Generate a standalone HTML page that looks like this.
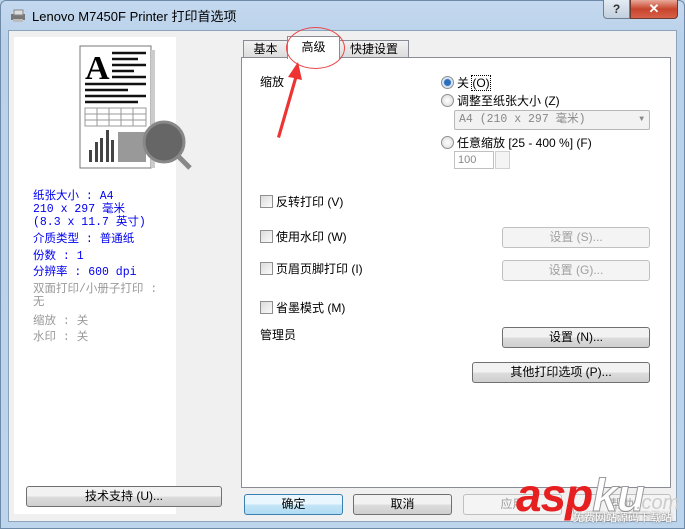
<!DOCTYPE html>
<html><head><meta charset="utf-8"><style>
*{margin:0;padding:0;box-sizing:border-box}
body{width:685px;height:529px;overflow:hidden;background:#bcd3ea;font-family:"Liberation Sans","Noto Sans CJK SC",sans-serif;font-size:12px;color:#000;position:relative}
.a{position:absolute}
.frame{left:0;top:0;width:685px;height:529px;background:linear-gradient(#c4d9ef,#b9d1ea 40px,#bcd4ec);border:1px solid #6d8aa8;border-radius:6px 6px 0 0}
.client{left:8px;top:30px;width:669px;height:492px;background:#f0f0f0;border:1px solid #8da3bb}
.btn{position:absolute;height:21px;border:1px solid #707070;border-radius:3px;background:linear-gradient(#f2f2f2 50%,#dddddd 50%,#cfcfcf);text-align:center;line-height:19px;font-size:12px}
.dis{border-color:#c0c0c0;background:#f4f4f4;color:#a0a0a0}
.cb{position:absolute;width:13px;height:13px;border:1px solid #8e8f8f;background:linear-gradient(135deg,#dcdcdc,#fbfbfb)}
.rd{position:absolute;width:13px;height:13px;border:1px solid #8e8f8f;border-radius:50%;background:radial-gradient(#fff,#d8d8d8)}
.hr{position:absolute;height:1px;background:#a0a0a0;border-bottom:1px solid #fff}
.blue{color:#0000f0;font-family:"Liberation Mono","Noto Sans CJK SC",monospace;font-size:11.5px;line-height:13px}
.gray{color:#9a9a9a;font-family:"Liberation Mono","Noto Sans CJK SC",monospace;font-size:11.5px;line-height:13px}
</style></head><body>
<div class="a frame"></div>
<svg class="a" style="left:9px;top:8px" width="18" height="16"><rect x="2" y="6" width="14" height="6" fill="#777"/><rect x="5" y="2" width="9" height="5" fill="#ddd" stroke="#888"/><rect x="4" y="11" width="10" height="3" fill="#bbb"/></svg>
<div class="a" style="left:32px;top:6px;font-size:13px">Lenovo M7450F Printer 打印首选项</div>
<div class="a" style="left:603px;top:0;width:27px;height:19px;border:1px solid #6f7f90;border-top:none;border-radius:0 0 0 4px;background:linear-gradient(#e4ebf3,#c2d0de);text-align:center;font-weight:bold;color:#333;line-height:18px">?</div>
<div class="a" style="left:630px;top:0;width:48px;height:19px;border:1px solid #6f3a30;border-top:none;border-radius:0 0 4px 0;background:linear-gradient(#e9a99a,#c7452d 50%,#d8604a);text-align:center;font-weight:bold;color:#fff;line-height:18px;font-size:13px">✕</div>
<div class="a client"></div>
<div class="a" style="left:14px;top:37px;width:162px;height:477px;background:#fff"></div>
<svg class="a" style="left:78px;top:44px" width="120" height="126">
<rect x="2" y="2" width="71" height="122" fill="#fff" stroke="#777"/>
<rect x="73" y="6" width="4" height="118" fill="#ccc"/>
<text x="7" y="35" font-family="Liberation Serif" font-weight="bold" font-size="34">A</text>
<g stroke="#111" stroke-width="2.5"><line x1="34" y1="9" x2="68" y2="9"/><line x1="34" y1="15" x2="60" y2="15"/><line x1="34" y1="21" x2="68" y2="21"/><line x1="34" y1="27" x2="56" y2="27"/><line x1="34" y1="33" x2="68" y2="33"/><line x1="7" y1="40" x2="68" y2="40"/><line x1="7" y1="46" x2="50" y2="46"/><line x1="7" y1="52" x2="68" y2="52"/><line x1="7" y1="58" x2="60" y2="58"/></g>
<g stroke="#999" stroke-width="1"><rect x="7" y="64" width="61" height="18" fill="none"/><line x1="7" y1="70" x2="68" y2="70"/><line x1="7" y1="76" x2="68" y2="76"/><line x1="19" y1="64" x2="19" y2="82"/><line x1="31" y1="64" x2="31" y2="82"/><line x1="43" y1="64" x2="43" y2="82"/><line x1="55" y1="64" x2="55" y2="82"/></g>
<g fill="#444"><rect x="11" y="106" width="3" height="12"/><rect x="17" y="98" width="3" height="20"/><rect x="22" y="94" width="3" height="24"/><rect x="28" y="86" width="3" height="32"/><rect x="33" y="96" width="3" height="22"/></g>
<rect x="40" y="88" width="28" height="30" fill="#999"/>
<circle cx="86" cy="98" r="20" fill="#666" stroke="#888" stroke-width="3"/>
<line x1="100" y1="112" x2="112" y2="124" stroke="#888" stroke-width="5"/>
</svg>
<div class="a blue" style="left:33px;top:190px">纸张大小 : A4<br>210 x 297 毫米<br>(8.3 x 11.7 英寸)</div>
<div class="a blue" style="left:33px;top:233px">介质类型 : 普通纸</div>
<div class="a blue" style="left:33px;top:250px">份数 : 1</div>
<div class="a blue" style="left:33px;top:266px">分辨率 : 600 dpi</div>
<div class="a gray" style="left:33px;top:283px">双面打印/小册子打印 :<br>无</div>
<div class="a gray" style="left:33px;top:315px">缩放 : 关</div>
<div class="a gray" style="left:33px;top:331px">水印 : 关</div>
<div class="btn" style="left:26px;top:486px;width:196px">技术支持 (U)...</div>
<div class="a" style="left:241px;top:57px;width:430px;height:431px;background:#fff;border:1px solid #898c95"></div>
<div class="a" style="left:243px;top:40px;width:45px;height:18px;border:1px solid #898c95;background:linear-gradient(#f2f2f2,#dcdcdc);text-align:center;line-height:16px">基本</div>
<div class="a" style="left:339px;top:40px;width:70px;height:18px;border:1px solid #898c95;background:linear-gradient(#f2f2f2,#dcdcdc);text-align:center;line-height:16px">快捷设置</div>
<div class="a" style="left:287px;top:36px;width:53px;height:23px;border:1px solid #898c95;border-bottom:none;background:#fff;text-align:center;line-height:20px">高级</div>
<div class="a" style="left:286px;top:27px;width:59px;height:42px;border:1.5px solid #e84848;border-radius:50%"></div>
<svg class="a" style="left:270px;top:60px" width="40" height="80"><polygon points="7,77 24,18 18,17 28,2 32,20 27,19 10,78" fill="#ee3333"/></svg>
<div class="a" style="left:260px;top:73px">缩放</div>
<div class="rd" style="left:441px;top:76px;background:radial-gradient(#2a6fbf 3px,#d8e6f4 4px)"></div>
<div class="a" style="left:457px;top:74px">关 <span style="outline:1px dotted #000">(O)</span></div>
<div class="rd" style="left:441px;top:94px"></div>
<div class="a" style="left:457px;top:92px">调整至纸张大小 (Z)</div>
<div class="a" style="left:454px;top:110px;width:196px;height:20px;border:1px solid #b8b8b8;border-radius:2px;background:#f2f2f2;color:#888;font-family:'Liberation Mono','Noto Sans CJK SC',monospace;line-height:18px;padding-left:4px;font-size:11.5px">A4 (210 x 297 毫米)<span style="position:absolute;right:5px;font-size:8px">▼</span></div>
<div class="rd" style="left:441px;top:136px"></div>
<div class="a" style="left:457px;top:134px">任意缩放 [25 - 400 %] (F)</div>
<div class="a" style="left:454px;top:151px;width:40px;height:18px;border:1px solid #c0c0c0;color:#888;font-size:11px;line-height:16px;padding-left:3px">100</div>
<div class="a" style="left:495px;top:151px;width:15px;height:18px;border:1px solid #d0d0d0;background:#f4f4f4"></div>
<div class="cb" style="left:260px;top:195px"></div><div class="a" style="left:276px;top:193px">反转打印 (V)</div>
<div class="hr" style="left:260px;top:213px;width:388px"></div>
<div class="cb" style="left:260px;top:230px"></div><div class="a" style="left:276px;top:228px">使用水印 (W)</div>
<div class="btn dis" style="left:502px;top:227px;width:148px">设置 (S)...</div>
<div class="cb" style="left:260px;top:262px"></div><div class="a" style="left:276px;top:260px">页眉页脚打印 (I)</div>
<div class="btn dis" style="left:502px;top:260px;width:148px">设置 (G)...</div>
<div class="hr" style="left:260px;top:287px;width:388px"></div>
<div class="cb" style="left:260px;top:301px"></div><div class="a" style="left:276px;top:299px">省墨模式 (M)</div>
<div class="a" style="left:260px;top:326px">管理员</div>
<div class="btn" style="left:502px;top:327px;width:148px">设置 (N)...</div>
<div class="hr" style="left:260px;top:352px;width:388px"></div>
<div class="btn" style="left:472px;top:362px;width:178px">其他打印选项 (P)...</div>
<div class="hr" style="left:260px;top:451px;width:388px"></div>
<div class="btn" style="left:244px;top:494px;width:99px;border-color:#3c7fb1;background:linear-gradient(#eaf6fd 50%,#c4e5f6 50%,#b0dcf4)">确定</div>
<div class="btn" style="left:353px;top:494px;width:99px">取消</div>
<div class="btn dis" style="left:463px;top:494px;width:99px">应用</div>
<div class="btn dis" style="left:573px;top:494px;width:98px">帮助</div>
<div class="a" style="left:516px;top:468px;font:italic bold 46px 'Liberation Sans',sans-serif;color:#e62020;letter-spacing:-1px">asp<span style="color:#fff;-webkit-text-stroke:1px #999">ku</span></div>
<div class="a" style="left:636px;top:492px;font:italic 20px 'Liberation Sans',sans-serif;color:#ccc">.com</div>
<div class="a" style="left:573px;top:509px;font-size:11px;color:#fff;text-shadow:0 0 2px #555">免费网站源码下载站</div>
</body></html>
